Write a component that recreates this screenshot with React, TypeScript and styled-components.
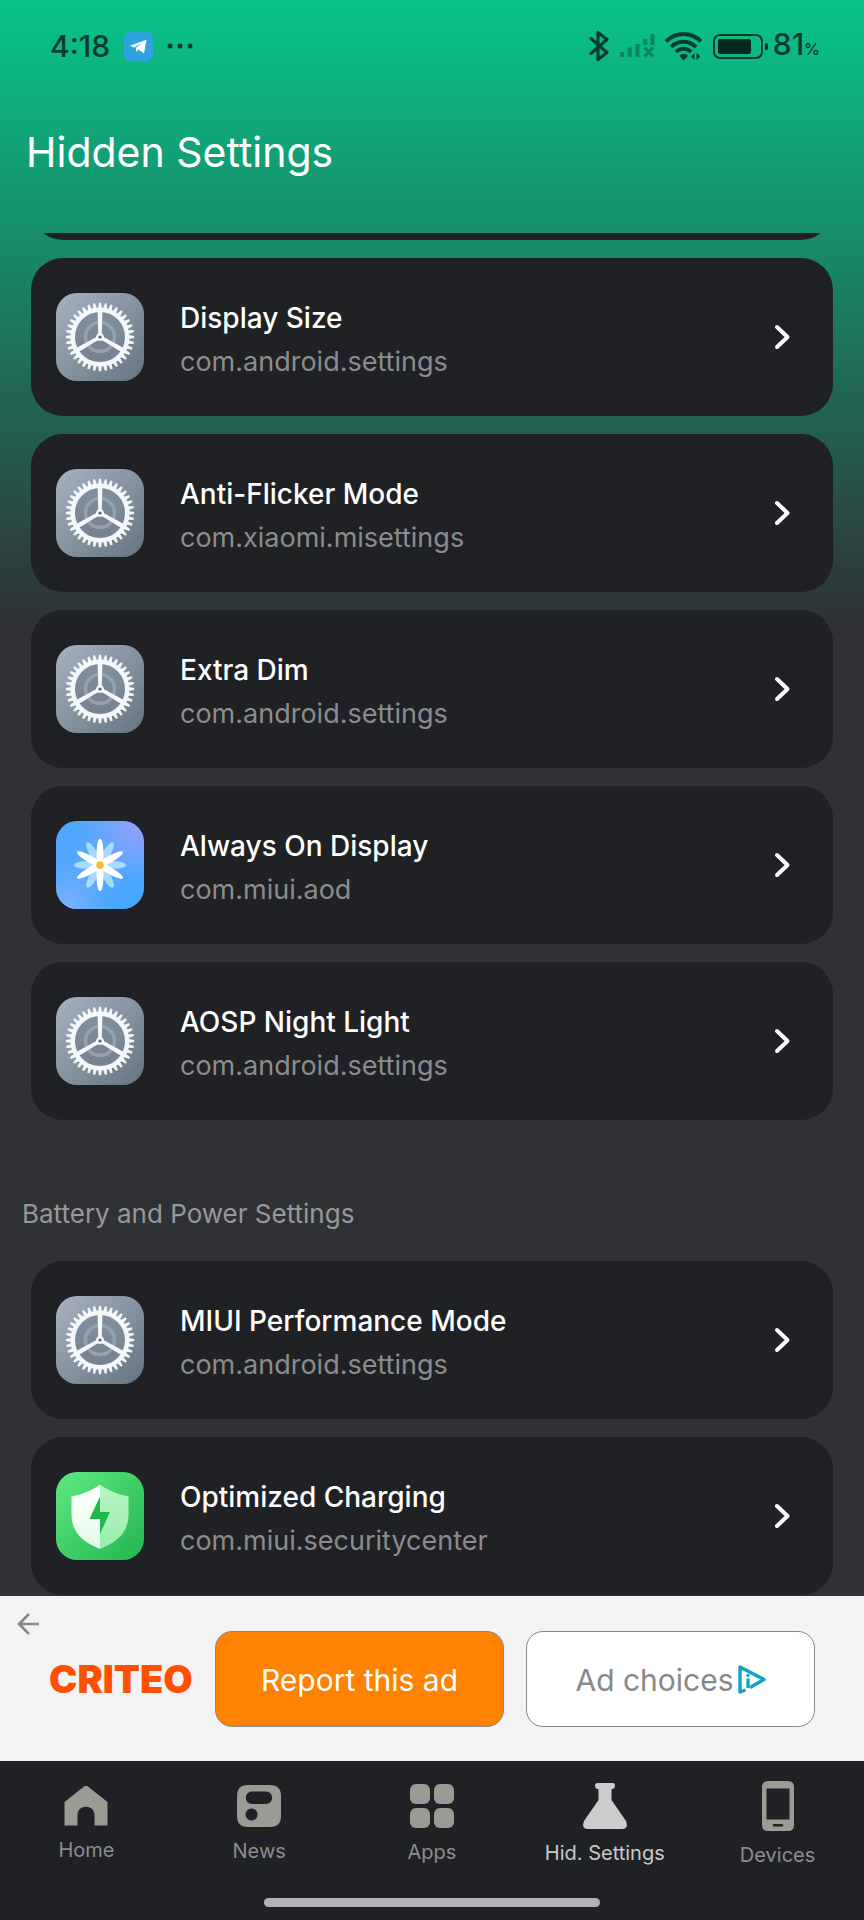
import React from 'react';
import styled, { createGlobalStyle } from 'styled-components';

const GlobalStyle = createGlobalStyle`
  * {
    box-sizing: border-box;
  }
  body {
    margin: 0;
    background: #2f3035;
    font-family: Inter, Roboto, sans-serif;
  }
  h1, h2, ul {
    margin: 0;
    padding: 0;
    list-style: none;
  }
  button {
    font-family: inherit;
    cursor: pointer;
  }
  svg {
    display: block;
    flex: none;
  }
`;

const Screen = styled.div`
  display: flex;
  flex-direction: column;
  height: 100vh;
  overflow: hidden;
  background: linear-gradient(to bottom, #08c48a 0, #2f3135 620px);
`;

const StatusBar = styled.div`
  display: flex;
  justify-content: space-between;
  align-items: center;
  padding: 28px 44px 28px 50px;
  height: 92px;
  color: #053c2b;
`;

const StatusGroup = styled.div<{ $gap: number }>`
  display: flex;
  align-items: center;
  gap: ${({ $gap }) => $gap}px;
`;

const StatusText = styled.span`
  font-size: 30px;
  font-weight: 500;
  line-height: 36px;
  small {
    font-size: 16px;
  }
`;

const Header = styled.header`
  padding: 35px 26px 56px;
`;

const Title = styled.h1`
  color: #fff;
  font-size: 41px;
  font-weight: 400;
  line-height: 50px;
`;

const Content = styled.main`
  flex: 1;
  min-height: 0;
  display: flex;
  flex-direction: column;
  justify-content: flex-end;
  overflow: hidden;
  padding-bottom: 1px;
`;

const CardList = styled.ul`
  display: flex;
  flex-direction: column;
  flex: none;
  gap: 18px;
  padding: 0 31px;
`;

const Card = styled.button`
  display: flex;
  align-items: center;
  width: 100%;
  height: 158px;
  padding: 0 42px 0 25px;
  border: none;
  border-radius: 32px;
  background: #202124;
  text-align: left;
`;

const HiddenCard = styled.div`
  height: 158px;
  border-radius: 32px;
  background: #202124;
`;

const CardText = styled.span`
  display: flex;
  flex-direction: column;
  flex: 1;
  gap: 8px;
  margin-left: 36px;
  padding-top: 6px;
`;

const CardTitle = styled.span`
  color: #fff;
  font-size: 28px;
  font-weight: 500;
  line-height: 35px;
`;

const CardPackage = styled.span`
  color: #8b8c8f;
  font-size: 27px;
  line-height: 35px;
`;

const SectionTitle = styled.h2`
  flex: none;
  padding: 77px 22px 30px;
  color: #97989b;
  font-size: 26px;
  font-weight: 400;
  line-height: 34px;
`;

const AdBanner = styled.aside`
  position: relative;
  display: flex;
  align-items: center;
  gap: 22px;
  height: 165px;
  padding: 0 49px;
  background: #f3f3f3;
`;

const AdBack = styled.button`
  position: absolute;
  top: 16px;
  left: 16px;
  padding: 0;
  border: none;
  background: none;
`;

const AdBrand = styled.span`
  width: 144px;
  color: #fe5000;
  font-size: 38px;
  font-weight: 900;
  line-height: 44px;
`;

const AdButton = styled.button<{ $primary?: boolean }>`
  flex: 1;
  display: flex;
  justify-content: center;
  align-items: center;
  gap: 4px;
  height: 96px;
  padding: 2px 0 0;
  border: 1px solid #888;
  border-radius: 17px;
  background: ${({ $primary }) => ($primary ? '#ff8200' : '#fff')};
  color: ${({ $primary }) => ($primary ? '#fff' : '#888')};
  font-size: 30px;
  white-space: nowrap;
`;

const BottomBar = styled.footer`
  display: flex;
  flex-direction: column;
  align-items: center;
  height: 159px;
  padding-bottom: 13px;
  background: #202124;
`;

const Tabs = styled.nav`
  flex: 1;
  display: flex;
  width: 100%;
  padding-bottom: 12px;
`;

const Tab = styled.a<{ $active?: boolean }>`
  flex: 1;
  display: flex;
  flex-direction: column;
  align-items: center;
  justify-content: center;
  gap: 12px;
  color: ${({ $active }) => ($active ? '#c9c9cc' : '#8c8d8f')};
  font-size: 20px;
  line-height: 24px;
  text-decoration: none;
  svg {
    fill: ${({ $active }) => ($active ? '#cccccd' : '#999b94')};
  }
`;

const GestureHandle = styled.div`
  width: 39%;
  height: 9px;
  border-radius: 5px;
  background: #b0b2b6;
`;

const TEETH = Array.from({ length: 36 }, (_, i) => i * 10);

const GearIcon = () => (
  <svg width="88" height="88" viewBox="0 0 88 88">
    <defs>
      <linearGradient id="gearBg" x1="0" y1="0" x2="1" y2="1">
        <stop offset="0" stopColor="#a7b1c2" />
        <stop offset="1" stopColor="#647482" />
      </linearGradient>
      <linearGradient id="gearFill" x1="0" y1="0" x2="0" y2="1">
        <stop offset="0" stopColor="#8190a0" />
        <stop offset="1" stopColor="#74818f" />
      </linearGradient>
    </defs>
    <rect width="88" height="88" rx="21" fill="url(#gearBg)" />
    <circle cx="44" cy="44" r="27" fill="url(#gearFill)" />
    <circle cx="44" cy="44" r="14.5" fill="none" stroke="#95a1af" strokeWidth="3.5" />
    <g fill="#f5f8fb">
      {TEETH.map((angle) => (
        <path key={angle} d="M42.1 15.5 43 9.8h2l.9 5.7z" transform={`rotate(${angle} 44 44)`} />
      ))}
    </g>
    <circle cx="44" cy="44" r="27.2" fill="none" stroke="#f5f8fb" strokeWidth="4.4" />
    <g fill="#f5f8fb">
      {[0, 120, 240].map((angle) => (
        <path key={angle} d="M41.6 18h4.8l-.6 22 1.6 4h-6.8l1.6-4z" transform={`rotate(${angle} 44 44)`} />
      ))}
      <circle cx="44" cy="44" r="3.8" />
    </g>
    <circle cx="44" cy="44" r="1.6" fill="#5a6672" />
  </svg>
);

const FlowerIcon = () => (
  <svg width="88" height="88" viewBox="0 0 88 88">
    <defs>
      <linearGradient id="flowerBg" x1="0" y1="0" x2="1" y2="1">
        <stop offset="0" stopColor="#4aa9fc" />
        <stop offset="0.5" stopColor="#5ca6fc" />
        <stop offset="1" stopColor="#3fa8fe" />
      </linearGradient>
      <radialGradient id="flowerGlow" cx="1" cy="0" r="0.7">
        <stop offset="0" stopColor="#a79bfb" />
        <stop offset="1" stopColor="#7fa4ff" stopOpacity="0" />
      </radialGradient>
      <radialGradient id="flowerGlowLow" cx="0.1" cy="1" r="0.5">
        <stop offset="0" stopColor="#7fb4fd" />
        <stop offset="1" stopColor="#6bb0ff" stopOpacity="0" />
      </radialGradient>
    </defs>
    <rect width="88" height="88" rx="21" fill="url(#flowerBg)" />
    <rect width="88" height="88" rx="21" fill="url(#flowerGlow)" />
    <rect width="88" height="88" rx="21" fill="url(#flowerGlowLow)" />
    <g fill="#a6daff">
      {[30, 90, 150, 210, 270, 330].map((angle) => (
        <path key={angle} d="M43 44C39.5 34 39.5 25 42 19.5q2-3 4 0C48.500 25 48.500 34 45 44z" transform={`rotate(${angle} 44 44)`} />
      ))}
    </g>
    <g fill="#fff">
      {[0, 60, 120, 180, 240, 300].map((angle) => (
        <path key={angle} d="M41 42C40 33 40.5 25 42.2 19.500q1.8-3.500 3.600 0C47.500 25 48 33 47 42z" transform={`rotate(${angle} 44 44)`} />
      ))}
    </g>
    <circle cx="44" cy="44" r="3.8" fill="#fbb92b" />
  </svg>
);

const ShieldIcon = () => (
  <svg width="88" height="88" viewBox="0 0 88 88">
    <defs>
      <linearGradient id="shieldBg" x1="0" y1="0" x2="1" y2="1">
        <stop offset="0" stopColor="#5fe87f" />
        <stop offset="1" stopColor="#24b552" />
      </linearGradient>
      <linearGradient id="shieldLeft" x1="0" y1="0" x2="0" y2="1">
        <stop offset="0" stopColor="#fff" />
        <stop offset="1" stopColor="#e2fbe8" />
      </linearGradient>
      <linearGradient id="shieldRight" x1="0" y1="0" x2="0" y2="1">
        <stop offset="0" stopColor="#b9f5c5" />
        <stop offset="1" stopColor="#98eeab" />
      </linearGradient>
    </defs>
    <rect width="88" height="88" rx="21" fill="url(#shieldBg)" />
    <path d="M44 12.5C36 18.5 27 22 15.5 24.5v17C15.5 61 27 70 44 77z" fill="url(#shieldLeft)" />
    <path d="M44 12.5c8 6 17 9.5 28.5 12v17C72.5 61 61 70 44 77z" fill="url(#shieldRight)" />
    <path d="M44 24.5 33.500 47H44v15l10-22H44z" fill="#20b84c" />
  </svg>
);

const ChevronIcon = () => (
  <svg width="17" height="26" viewBox="0 0 17 26" fill="none" stroke="#fff" strokeWidth="4" strokeLinecap="round" strokeLinejoin="round">
    <path d="M3 3l10.500 10L3 23" />
  </svg>
);

const TelegramIcon = () => (
  <svg width="29" height="29" viewBox="0 0 29 29">
    <rect width="29" height="29" rx="6" fill="#2fa3dc" />
    <path d="M6 13.8 22.5 7.8 20 21.5l-5.500-4-2 2.500-.8-4 7-5.500-8.500 5z" fill="#fff" />
  </svg>
);

const DotsIcon = () => (
  <svg width="26" height="6" viewBox="0 0 26 6" fill="currentColor">
    <circle cx="3" cy="3" r="2.500" />
    <circle cx="13" cy="3" r="2.500" />
    <circle cx="23" cy="3" r="2.500" />
  </svg>
);

const BluetoothIcon = () => (
  <svg width="20" height="32" viewBox="0 0 20 32" fill="none" stroke="currentColor" strokeWidth="3.2" strokeLinecap="round" strokeLinejoin="round">
    <path d="M2 8.5 18 22.500 9 29.500V2.500l9 7L2 23.500" />
  </svg>
);

const SignalIcon = () => (
  <svg width="36" height="24" viewBox="0 0 36 24" stroke="#0a8560" strokeWidth="4" fill="none">
    <path d="M3 18v5M10.700 13.500V23M18.500 10v13M26.200 5v6M33.500 0v11" />
    <path d="M25.500 13.500l8.500 9M34 13.500l-8.500 9" strokeWidth="3" />
  </svg>
);

const WifiIcon = () => (
  <svg width="38" height="28" viewBox="0 0 38 28">
    <g fill="none" stroke="currentColor" strokeWidth="3.8">
      <path d="M1 9.500C11-.500 26-.500 36 9.500" />
      <path d="M6 15c7-7 18-7 25 0" />
      <path d="M11 20c4.500-4.500 10.500-4.500 15 0" />
    </g>
    <path d="M14.500 24c2-3 6.500-3 8.500 0l-4 4h-1z" fill="currentColor" />
    <path d="M26 24.500 29.500 21v7z M31.500 28v-7l4 3.500z" fill="currentColor" />
  </svg>
);

const BatteryIcon = () => (
  <svg width="55" height="25" viewBox="0 0 55 25">
    <rect x="1" y="1" width="48" height="23" rx="6" fill="none" stroke="currentColor" strokeWidth="2" />
    <rect x="5" y="5" width="33" height="15" rx="2" fill="#032a1d" />
    <rect x="52" y="9" width="3" height="7" rx="1.500" fill="currentColor" />
  </svg>
);

const ArrowIcon = () => (
  <svg width="24" height="24" viewBox="0 0 24 24" fill="none" stroke="#888" strokeWidth="2.600">
    <path d="M23 12H3M13 2 3 12l10 10" />
  </svg>
);

const AdChoicesIcon = () => (
  <svg width="28" height="29" viewBox="0 0 28 29" fill="none" stroke="#14a5c2" strokeWidth="3.400" strokeLinejoin="round">
    <path d="M7.500 25 2 27V2l24 12.500L12 22.500" />
    <path d="M10 13.500v9.500" />
    <circle cx="10" cy="10.500" r="1.700" fill="#14a5c2" stroke="none" />
  </svg>
);

const HomeIcon = () => (
  <svg width="44" height="41" viewBox="0 0 44 41">
    <path d="M20 1.500q2-1.500 4 0L43.500 17v23.500h-13V30c0-11-17-11-17 0v10.500H.500V17z" />
  </svg>
);

const NewsIcon = () => (
  <svg width="44" height="42" viewBox="0 0 44 42">
    <path
      fillRule="evenodd"
      d="M11 0h22q11 0 11 11v20q0 11-11 11H11Q0 42 0 31V11Q0 0 11 0zM15 6.500a6 6 0 0 0 0 12.500h14a6 6 0 0 0 0-12.500zM14.500 23.500a6 6 0 1 0 .1 0z"
    />
  </svg>
);

const AppsIcon = () => (
  <svg width="44" height="44" viewBox="0 0 44 44">
    <rect width="20" height="20" rx="6" />
    <rect x="24" width="20" height="20" rx="6" />
    <rect y="24" width="20" height="20" rx="6" />
    <rect x="24" y="24" width="20" height="20" rx="6" />
  </svg>
);

const FlaskIcon = () => (
  <svg width="44" height="46" viewBox="0 0 44 46">
    <path d="M14 0h16q2 0 2 2.500T30 6h-1.500v11L43 38q3 8-4 8H5q-7 0-4-8l14.500-21V6H14q-2-1-2-3.500T14 0z" />
  </svg>
);

const PhoneIcon = () => (
  <svg width="32" height="50" viewBox="0 0 32 50">
    <path
      fillRule="evenodd"
      d="M6 0h20q6 0 6 6v38q0 6-6 6H6q-6 0-6-6V6q0-6 6-6zM4.500 7.500v31h23v-31zM12 43a1 1 0 0 0 0 2.500h8a1 1 0 0 0 0-2.500z"
    />
  </svg>
);

interface ISettingItem {
  title: string;
  packageName: string;
  Icon: React.FC;
}

const displaySettings: ISettingItem[] = [
  { title: 'Display Size', packageName: 'com.android.settings', Icon: GearIcon },
  { title: 'Anti-Flicker Mode', packageName: 'com.xiaomi.misettings', Icon: GearIcon },
  { title: 'Extra Dim', packageName: 'com.android.settings', Icon: GearIcon },
  { title: 'Always On Display', packageName: 'com.miui.aod', Icon: FlowerIcon },
  { title: 'AOSP Night Light', packageName: 'com.android.settings', Icon: GearIcon },
];

const batterySettings: ISettingItem[] = [
  { title: 'MIUI Performance Mode', packageName: 'com.android.settings', Icon: GearIcon },
  { title: 'Optimized Charging', packageName: 'com.miui.securitycenter', Icon: ShieldIcon },
];

const tabs = [
  { label: 'Home', Icon: HomeIcon },
  { label: 'News', Icon: NewsIcon },
  { label: 'Apps', Icon: AppsIcon },
  { label: 'Hid. Settings', Icon: FlaskIcon, active: true },
  { label: 'Devices', Icon: PhoneIcon },
];

const SettingCard: React.FC<ISettingItem> = ({ title, packageName, Icon }: ISettingItem) => (
  <li>
    <Card type="button">
      <Icon />
      <CardText>
        <CardTitle>{title}</CardTitle>
        <CardPackage>{packageName}</CardPackage>
      </CardText>
      <ChevronIcon />
    </Card>
  </li>
);

const App: React.FC = () => (
  <>
    <GlobalStyle />
    <Screen>
      <StatusBar>
        <StatusGroup $gap={14}>
          <StatusText>4:18</StatusText>
          <TelegramIcon />
          <DotsIcon />
        </StatusGroup>
        <StatusGroup $gap={5}>
          <StatusGroup $gap={10}>
            <BluetoothIcon />
            <SignalIcon />
            <WifiIcon />
            <BatteryIcon />
          </StatusGroup>
          <StatusText>
            81
            <small>%</small>
          </StatusText>
        </StatusGroup>
      </StatusBar>
      <Header>
        <Title>Hidden Settings</Title>
      </Header>
      <Content>
        <CardList>
          {/* scrolled almost out of view */}
          <li aria-hidden="true"><HiddenCard /></li>
          {displaySettings.map((item) => <SettingCard key={item.title} {...item} />)}
        </CardList>
        <SectionTitle>Battery and Power Settings</SectionTitle>
        <CardList>
          {batterySettings.map((item) => <SettingCard key={item.title} {...item} />)}
        </CardList>
      </Content>
      <AdBanner>
        <AdBack type="button" aria-label="Back"><ArrowIcon /></AdBack>
        <AdBrand>CRITEO</AdBrand>
        <AdButton type="button" $primary>Report this ad</AdButton>
        <AdButton type="button">
          Ad choices
          <AdChoicesIcon />
        </AdButton>
      </AdBanner>
      <BottomBar>
        <Tabs>
          {tabs.map(({ label, Icon, active }) => (
            <Tab key={label} href="#" $active={active}>
              <Icon />
              {label}
            </Tab>
          ))}
        </Tabs>
        <GestureHandle />
      </BottomBar>
    </Screen>
  </>
);

export default App;
